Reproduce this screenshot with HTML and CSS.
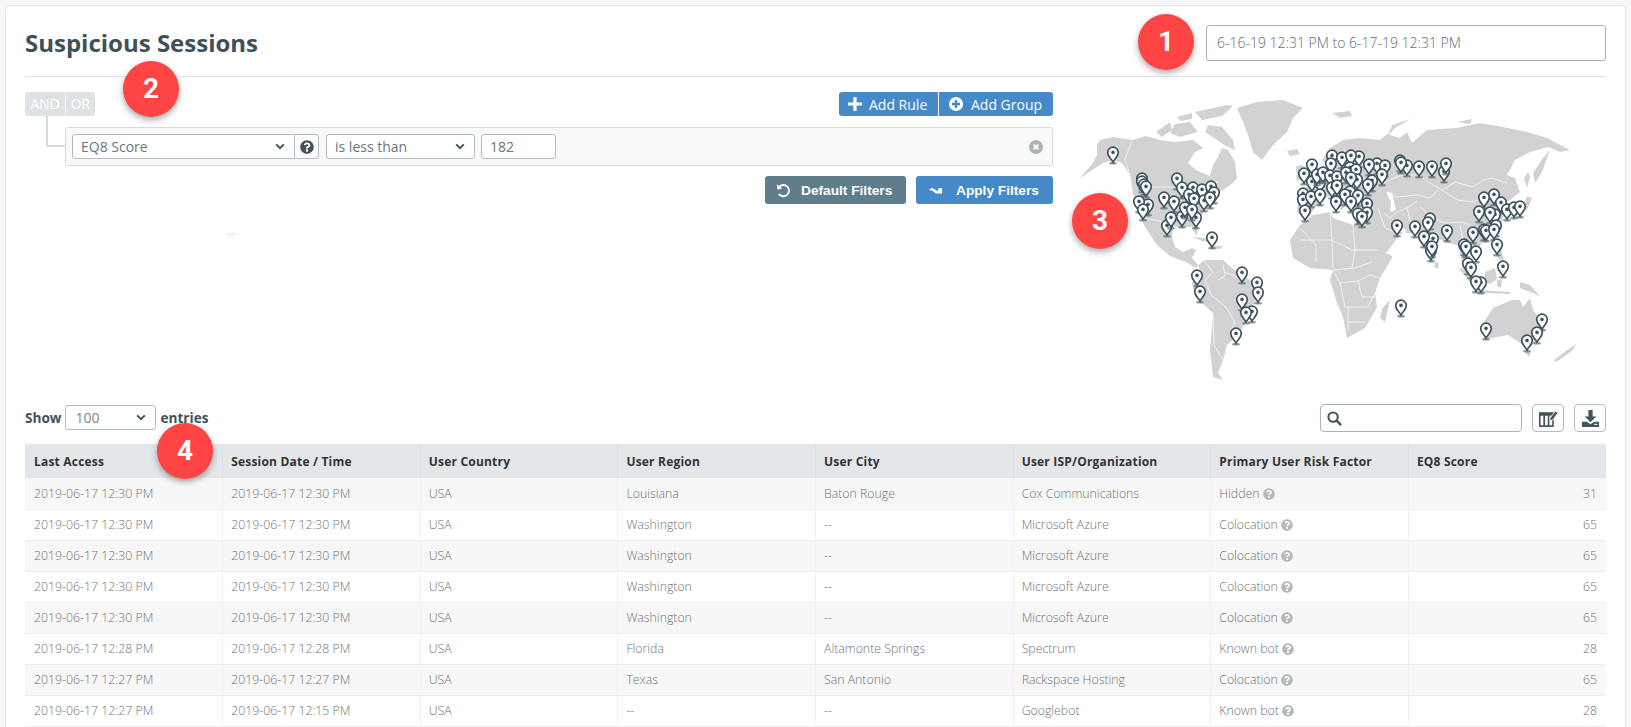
FILE: index.html
```html
<!DOCTYPE html>
<html lang="en">
    <head>
        <title>Suspicious Sessions</title>
        <link rel="stylesheet" href="styles.css">
    </head>
    <body>
        <svg class="icon-defs" width="0" height="0">
            <defs>
                <symbol id="icon-help" viewBox="0 0 512 512"><path d="M504 256c0 136.997-111.043 248-248 248S8 392.997 8 256C8 119.083 119.043 8 256 8s248 111.083 248 248zM262.655 90c-54.497 0-89.255 22.957-116.549 63.758-3.536 5.286-2.353 12.415 2.715 16.258l34.699 26.31c5.205 3.947 12.621 3.008 16.665-2.122 17.864-22.658 30.113-35.797 57.303-35.797 20.429 0 45.698 13.148 45.698 32.958 0 14.976-12.363 22.667-32.534 33.976C247.128 238.528 216 254.941 216 296v4c0 6.627 5.373 12 12 12h56c6.627 0 12-5.373 12-12v-1.333c0-28.462 83.186-29.647 83.186-106.667 0-58.002-60.165-102-116.531-102zM256 338c-25.365 0-46 20.635-46 46 0 25.364 20.635 46 46 46s46-20.636 46-46c0-25.365-20.635-46-46-46z"/></symbol>
                <symbol id="icon-chevron" viewBox="0 0 10 7"><path d="M1.2 1.4 5 5.2 8.8 1.4" fill="none" stroke="currentColor" stroke-width="2"/></symbol>
                <g id="pin">
                    <ellipse cx="0" cy="10.300" rx="4" ry="1.200" fill="#5f7178" opacity="0.75"/>
                    <path d="M0 9C-1.800 5.600-5.300 3.600-5.300-.5A5.300 5.300 0 1 1 5.300-.5C5.300 3.600 1.800 5.600 0 9Z" fill="#fff" stroke="#3d535d" stroke-width="1.700"/>
                    <circle cx="0" cy="-.6" r="1.800" fill="#3d535d"/>
                </g>
            </defs>
        </svg>

        <div class="card">
            <!-- Title and date range -->
            <div class="page-head">
                <h1>Suspicious Sessions</h1>
                <div class="date-range">6-16-19 12:31 PM to 6-17-19 12:31 PM</div>
            </div>

            <div class="filter-row">
                <!-- Query builder -->
                <div class="builder">
                    <div class="builder-top">
                        <div class="logic-group">
                            <span class="logic-btn logic-and">AND</span>
                            <span class="logic-btn logic-or">OR</span>
                        </div>
                        <div class="add-group">
                            <span class="add-btn add-rule">
                                <svg class="add-icon" viewBox="0 0 14 14"><path d="M5.400 0h3.200v5.400H14v3.200H8.600V14H5.400V8.600H0V5.400h5.400z" fill="#fff"/></svg>
                                Add Rule
                            </span>
                            <span class="add-btn add-grp">
                                <svg class="add-icon" viewBox="0 0 14 14"><circle cx="7" cy="7" r="7" fill="#fff"/><path d="M5.800 3h2.400v2.800H11v2.400H8.200V11H5.800V8.200H3V5.800h2.800z" fill="#4589c8"/></svg>
                                Add Group
                            </span>
                        </div>
                    </div>
                    <div class="rule-wrap">
                        <div class="rule-link"></div>
                        <div class="rule-box">
                            <div class="field field-name">EQ8 Score <svg class="chevron"><use href="#icon-chevron"/></svg></div>
                            <div class="field-help"><svg class="help-dark"><use href="#icon-help"/></svg></div>
                            <div class="field field-op">is less than <svg class="chevron"><use href="#icon-chevron"/></svg></div>
                            <div class="field field-value">182</div>
                            <svg class="rule-remove" viewBox="0 0 14 14"><circle cx="7" cy="7" r="7" fill="#aeb4b6"/><path d="M4.600 4.600l4.800 4.800M9.400 4.600 4.600 9.400" stroke="#fff" stroke-width="2"/></svg>
                        </div>
                    </div>
                    <div class="filter-actions">
                        <span class="action-btn btn-default">
                            <svg class="action-icon" viewBox="0 0 16 16"><path d="M3.200 4.400A6 6 0 1 1 3 11.600" fill="none" stroke="#fff" stroke-width="2"/><path d="M.8 1.200 1.400 6.800 6.800 6Z" fill="#fff"/></svg>
                            Default Filters
                        </span>
                        <span class="action-btn btn-apply">
                            <svg class="action-icon icon-apply" viewBox="0 0 16 10"><path d="M1 5C3 2.400 5.500 2.400 8 4.800 9 5.700 10 6 11 6V3.200L15 3V8.600H8C6 6 3.500 5 1 5Z" fill="#fff"/></svg>
                            Apply Filters
                        </span>
                    </div>
                    <div class="stray-mark"></div>
                </div>

                <!-- World map with session pins -->
                <svg class="world-map" viewBox="1061 77 545 327" width="545" height="327">
                    <g class="land">
                        <path d="M1080 178 1093 163 1097 155 1097 145 1100 140 1113 137 1132 140 1146 136 1160 140 1175 142 1193 140 1203 148 1195 152 1188 163 1196 170 1205 174 1210 176 1213 165 1218 157 1222 148 1228 150 1235 162 1237 178 1233 183 1223 190 1216 192 1213 198 1203 212 1198 225 1197 236 1193 230 1192 227 1173 227 1172 237 1175 247 1183 252 1192 248 1196 250 1192 258 1198 265 1196 268 1186 262 1170 256 1157 245 1145 227 1135 205 1130 175 1122 163 1113 160 1103 163Z"/>
                        <path d="M1198 265 1205 260 1223 260 1238 273 1262 287 1260 293 1252 307 1248 320 1235 338 1227 345 1223 360 1218 373 1223 380 1213 377 1210 350 1213 313 1195 297 1192 283 1200 270Z"/>
                        <path d="M1237 108 1257 102 1283 100 1303 108 1293 118 1287 132 1273 145 1262 160 1253 152 1248 135 1243 122Z"/>
                        <path d="M1208 125 1222 127 1233 140 1235 150 1226 146 1214 138 1205 132Z"/>
                        <path d="M1175 124 1190 122 1198 132 1180 137 1170 133Z"/>
                        <path d="M1195 112 1227 105 1233 106 1222 116 1202 120Z"/>
                        <path d="M1156 132 1170 122 1172 130 1162 137Z"/>
                        <path d="M1177 117 1192 113 1192 119 1180 121Z"/>
                        <path d="M1287 151 1297 149 1300 154 1290 156Z"/>
                        <path d="M1296 166 1303 165 1306 178 1297 181Z"/>
                        <path d="M1332 113 1350 111 1352 116 1340 118Z"/>
                        <path d="M1387 137 1392 125 1410 119 1395 128Z"/>
                        <path d="M1457 122 1472 119 1470 124Z"/>
                        <path d="M1192 237 1204 238 1217 243 1202 241Z"/>
                        <path d="M1210 246 1222 246 1221 249 1211 249Z"/>
                        <path d="M1290 240 1300 225 1313 215 1330 212 1333 218 1353 225 1368 225 1373 235 1380 250 1392 256 1392 258 1380 278 1375 293 1377 307 1365 328 1347 338 1343 317 1337 303 1330 280 1333 270 1310 268 1293 258Z"/>
                        <path d="M1390 300 1385 322 1380 318 1383 307Z"/>
                        <path d="M1297 212 1298 198 1303 190 1312 183 1325 178 1327 167 1322 160 1330 148 1343 140 1360 138 1380 140 1387 134 1400 138 1407 132 1412 143 1427 130 1457 128 1480 123 1503 127 1527 132 1547 138 1570 150 1560 152 1548 147 1530 152 1515 160 1507 175 1515 178 1520 192 1510 200 1507 202 1510 214 1505 212 1500 228 1487 238 1480 245 1477 258 1472 248 1465 257 1472 273 1462 263 1458 245 1447 243 1437 238 1432 258 1420 243 1417 233 1403 233 1398 237 1387 252 1377 253 1370 233 1365 220 1373 207 1368 205 1357 205 1352 212 1347 205 1341 210 1330 195 1317 205 1310 215 1300 215Z"/>
                        <path d="M1550 150 1543 158 1533 173 1535 183 1542 172 1547 158Z"/>
                        <path d="M1524 178 1528 172 1530 176 1527 188Z"/>
                        <path d="M1527 196 1532 198 1528 208 1516 216 1512 214 1524 206Z"/>
                        <path d="M1458 267 1466 270 1480 288 1476 290Z"/>
                        <path d="M1480 290 1510 292 1510 294 1482 293Z"/>
                        <path d="M1485 272 1495 268 1497 279 1490 284 1485 282Z"/>
                        <path d="M1497 280 1502 280 1501 288 1497 286Z"/>
                        <path d="M1520 282 1530 285 1540 296 1530 292 1520 288Z"/>
                        <path d="M1496 246 1501 248 1504 262 1498 258Z"/>
                        <path d="M1435 262 1439 263 1438 269 1434 267Z"/>
                        <path d="M1482 325 1493 308 1512 300 1520 300 1523 307 1530 298 1533 310 1545 325 1542 337 1530 347 1523 345 1508 335 1492 338 1485 340Z"/>
                        <path d="M1525 352 1531 352 1529 357Z"/>
                        <path d="M1576 344 1573 350 1562 358 1556 362 1554 360 1566 351Z"/>
                    </g>
                    <g class="borders">
                        <path d="M1132 140 1125 160 1130 175"/>
                        <path d="M1146 187H1178L1190 190 1203 188 1218 182"/>
                        <path d="M1145 218 1170 223 1176 228"/>
                        <path d="M1205 262 1213 272 1205 280 1211 295 1226 307 1235 322 1232 328"/>
                        <path d="M1223 264 1225 276 1218 280"/>
                        <path d="M1240 278 1232 275 1224 272"/>
                        <path d="M1213 313 1214 345 1223 360"/>
                        <path d="M1333 270 1355 268 1372 262"/>
                        <path d="M1352 268 1355 250 1353 225"/>
                        <path d="M1333 270 1340 283 1358 281 1362 297 1375 297"/>
                        <path d="M1340 283 1345 307 1368 307 1375 293"/>
                        <path d="M1348 307 1348 330"/>
                        <path d="M1348 322 1365 322"/>
                        <path d="M1358 281 1370 275 1380 278"/>
                        <path d="M1300 228 1316 245 1316 262"/>
                        <path d="M1330 212 1332 240 1352 250"/>
                        <path d="M1300 240H1332L1333 268"/>
                        <path d="M1352 250 1378 250"/>
                        <path d="M1383 183 1402 175 1418 175 1430 183 1442 190 1455 182 1473 187 1483 180 1492 178 1507 183"/>
                        <path d="M1442 190 1457 200 1473 202 1485 198"/>
                        <path d="M1387 192 1397 197 1417 195 1430 198 1438 190"/>
                        <path d="M1420 207 1433 218 1445 223 1462 222 1470 225"/>
                        <path d="M1384 213 1390 218 1397 212 1407 208 1417 201"/>
                        <path d="M1407 208 1412 228"/>
                        <path d="M1378 208 1385 228 1395 232"/>
                        <path d="M1460 225 1464 245"/>
                        <path d="M1320 185 1345 183 1370 178"/>
                        <path d="M1340 168 1345 148"/>
                    </g>
                    <path class="water" d="M1386 192 1392 193 1396 210 1390 212 1391 202Z"/>
                    <path class="water" d="M1396 226 1405 229 1406 233 1400 232Z"/>
                    <g class="pins">
                        <use href="#pin" x="1113" y="153"/>
                        <use href="#pin" x="1142" y="179"/>
                        <use href="#pin" x="1142" y="182"/>
                        <use href="#pin" x="1144" y="185"/>
                        <use href="#pin" x="1146" y="187"/>
                        <use href="#pin" x="1148" y="205"/>
                        <use href="#pin" x="1139" y="202"/>
                        <use href="#pin" x="1143" y="210"/>
                        <use href="#pin" x="1164" y="198"/>
                        <use href="#pin" x="1174" y="202"/>
                        <use href="#pin" x="1177" y="179"/>
                        <use href="#pin" x="1193" y="188"/>
                        <use href="#pin" x="1182" y="188"/>
                        <use href="#pin" x="1202" y="190"/>
                        <use href="#pin" x="1211" y="187"/>
                        <use href="#pin" x="1214" y="193"/>
                        <use href="#pin" x="1189" y="195"/>
                        <use href="#pin" x="1204" y="201"/>
                        <use href="#pin" x="1210" y="198"/>
                        <use href="#pin" x="1194" y="199"/>
                        <use href="#pin" x="1182" y="217"/>
                        <use href="#pin" x="1185" y="208"/>
                        <use href="#pin" x="1196" y="218"/>
                        <use href="#pin" x="1192" y="210"/>
                        <use href="#pin" x="1167" y="226"/>
                        <use href="#pin" x="1171" y="218"/>
                        <use href="#pin" x="1212" y="238"/>
                        <use href="#pin" x="1197" y="276"/>
                        <use href="#pin" x="1242" y="273"/>
                        <use href="#pin" x="1257" y="283"/>
                        <use href="#pin" x="1258" y="293"/>
                        <use href="#pin" x="1200" y="292"/>
                        <use href="#pin" x="1242" y="300"/>
                        <use href="#pin" x="1252" y="312"/>
                        <use href="#pin" x="1246" y="313"/>
                        <use href="#pin" x="1236" y="334"/>
                        <use href="#pin" x="1332" y="156"/>
                        <use href="#pin" x="1359" y="157"/>
                        <use href="#pin" x="1342" y="158"/>
                        <use href="#pin" x="1351" y="156"/>
                        <use href="#pin" x="1312" y="165"/>
                        <use href="#pin" x="1312" y="182"/>
                        <use href="#pin" x="1304" y="174"/>
                        <use href="#pin" x="1320" y="183"/>
                        <use href="#pin" x="1317" y="175"/>
                        <use href="#pin" x="1323" y="173"/>
                        <use href="#pin" x="1331" y="164"/>
                        <use href="#pin" x="1330" y="176"/>
                        <use href="#pin" x="1350" y="168"/>
                        <use href="#pin" x="1356" y="170"/>
                        <use href="#pin" x="1337" y="177"/>
                        <use href="#pin" x="1346" y="173"/>
                        <use href="#pin" x="1357" y="180"/>
                        <use href="#pin" x="1351" y="178"/>
                        <use href="#pin" x="1332" y="188"/>
                        <use href="#pin" x="1350" y="192"/>
                        <use href="#pin" x="1337" y="186"/>
                        <use href="#pin" x="1358" y="196"/>
                        <use href="#pin" x="1345" y="195"/>
                        <use href="#pin" x="1303" y="194"/>
                        <use href="#pin" x="1303" y="200"/>
                        <use href="#pin" x="1311" y="197"/>
                        <use href="#pin" x="1320" y="195"/>
                        <use href="#pin" x="1336" y="202"/>
                        <use href="#pin" x="1351" y="202"/>
                        <use href="#pin" x="1305" y="211"/>
                        <use href="#pin" x="1367" y="204"/>
                        <use href="#pin" x="1367" y="213"/>
                        <use href="#pin" x="1358" y="214"/>
                        <use href="#pin" x="1362" y="217"/>
                        <use href="#pin" x="1377" y="164"/>
                        <use href="#pin" x="1369" y="165"/>
                        <use href="#pin" x="1385" y="166"/>
                        <use href="#pin" x="1382" y="175"/>
                        <use href="#pin" x="1372" y="181"/>
                        <use href="#pin" x="1368" y="185"/>
                        <use href="#pin" x="1407" y="166"/>
                        <use href="#pin" x="1400" y="161"/>
                        <use href="#pin" x="1401" y="163"/>
                        <use href="#pin" x="1419" y="167"/>
                        <use href="#pin" x="1432" y="167"/>
                        <use href="#pin" x="1444" y="172"/>
                        <use href="#pin" x="1446" y="164"/>
                        <use href="#pin" x="1494" y="195"/>
                        <use href="#pin" x="1484" y="198"/>
                        <use href="#pin" x="1501" y="203"/>
                        <use href="#pin" x="1479" y="212"/>
                        <use href="#pin" x="1495" y="215"/>
                        <use href="#pin" x="1490" y="213"/>
                        <use href="#pin" x="1507" y="210"/>
                        <use href="#pin" x="1514" y="208"/>
                        <use href="#pin" x="1520" y="207"/>
                        <use href="#pin" x="1397" y="226"/>
                        <use href="#pin" x="1415" y="227"/>
                        <use href="#pin" x="1430" y="219"/>
                        <use href="#pin" x="1428" y="223"/>
                        <use href="#pin" x="1447" y="231"/>
                        <use href="#pin" x="1433" y="239"/>
                        <use href="#pin" x="1424" y="237"/>
                        <use href="#pin" x="1431" y="251"/>
                        <use href="#pin" x="1432" y="247"/>
                        <use href="#pin" x="1473" y="233"/>
                        <use href="#pin" x="1496" y="226"/>
                        <use href="#pin" x="1484" y="230"/>
                        <use href="#pin" x="1486" y="231"/>
                        <use href="#pin" x="1494" y="230"/>
                        <use href="#pin" x="1464" y="245"/>
                        <use href="#pin" x="1466" y="247"/>
                        <use href="#pin" x="1476" y="252"/>
                        <use href="#pin" x="1497" y="245"/>
                        <use href="#pin" x="1503" y="267"/>
                        <use href="#pin" x="1468" y="264"/>
                        <use href="#pin" x="1471" y="268"/>
                        <use href="#pin" x="1481" y="283"/>
                        <use href="#pin" x="1476" y="282"/>
                        <use href="#pin" x="1401" y="306"/>
                        <use href="#pin" x="1486" y="329"/>
                        <use href="#pin" x="1542" y="320"/>
                        <use href="#pin" x="1537" y="333"/>
                        <use href="#pin" x="1527" y="341"/>
                    </g>
                </svg>
            </div>

            <!-- Table tools -->
            <div class="table-tools">
                <div class="length-control">
                    <span>Show</span>
                    <div class="field field-length">100 <svg class="chevron"><use href="#icon-chevron"/></svg></div>
                    <span>entries</span>
                </div>
                <div class="tool-group">
                    <div class="search-box">
                        <svg class="search-icon" viewBox="0 0 16 16"><circle cx="6.500" cy="6.500" r="5" fill="none" stroke="#41565f" stroke-width="2.200"/><path d="M10.300 10.300 15 15" stroke="#41565f" stroke-width="2.600"/></svg>
                    </div>
                    <div class="tool-btn">
                        <svg class="tool-icon" viewBox="0 0 18 16"><path d="M0 2h14v14H0z" fill="#41565f"/><path d="M1.500 5.500h2.600V14.500H1.500zM5.700 5.500h2.600V14.500H5.700zM9.900 5.500h2.600V14.500H9.900z" fill="#fff"/><path d="M10.500 7.500 15.500 .8 18 2.700 13 9.400 10.200 10Z" fill="#41565f" stroke="#fff" stroke-width=".8"/></svg>
                    </div>
                    <div class="tool-btn">
                        <svg class="tool-icon" viewBox="0 0 16 16"><path d="M6 0h4v6h3.500L8 11.500 2.500 6H6z" fill="#41565f"/><path d="M0 11h4.500L8 13.500 11.500 11H16v5H0z" fill="#41565f"/><path d="M11.500 13.500h3" stroke="#fff" stroke-width="1"/></svg>
                    </div>
                </div>
            </div>

            <!-- Sessions table -->
            <table class="session-table">
                <thead>
                    <tr>
                        <th>Last Access</th>
                        <th>Session Date / Time</th>
                        <th>User Country</th>
                        <th>User Region</th>
                        <th>User City</th>
                        <th>User ISP/Organization</th>
                        <th>Primary User Risk Factor</th>
                        <th>EQ8 Score</th>
                    </tr>
                </thead>
                <tbody>
                    <tr>
                        <td>2019-06-17 12:30 PM</td><td>2019-06-17 12:30 PM</td><td>USA</td><td>Louisiana</td><td>Baton Rouge</td><td>Cox Communications</td>
                        <td>Hidden <svg class="help-cell"><use href="#icon-help"/></svg></td><td class="score">31</td>
                    </tr>
                    <tr>
                        <td>2019-06-17 12:30 PM</td><td>2019-06-17 12:30 PM</td><td>USA</td><td>Washington</td><td>--</td><td>Microsoft Azure</td>
                        <td>Colocation <svg class="help-cell"><use href="#icon-help"/></svg></td><td class="score">65</td>
                    </tr>
                    <tr>
                        <td>2019-06-17 12:30 PM</td><td>2019-06-17 12:30 PM</td><td>USA</td><td>Washington</td><td>--</td><td>Microsoft Azure</td>
                        <td>Colocation <svg class="help-cell"><use href="#icon-help"/></svg></td><td class="score">65</td>
                    </tr>
                    <tr>
                        <td>2019-06-17 12:30 PM</td><td>2019-06-17 12:30 PM</td><td>USA</td><td>Washington</td><td>--</td><td>Microsoft Azure</td>
                        <td>Colocation <svg class="help-cell"><use href="#icon-help"/></svg></td><td class="score">65</td>
                    </tr>
                    <tr>
                        <td>2019-06-17 12:30 PM</td><td>2019-06-17 12:30 PM</td><td>USA</td><td>Washington</td><td>--</td><td>Microsoft Azure</td>
                        <td>Colocation <svg class="help-cell"><use href="#icon-help"/></svg></td><td class="score">65</td>
                    </tr>
                    <tr>
                        <td>2019-06-17 12:28 PM</td><td>2019-06-17 12:28 PM</td><td>USA</td><td>Florida</td><td>Altamonte Springs</td><td>Spectrum</td>
                        <td>Known bot <svg class="help-cell"><use href="#icon-help"/></svg></td><td class="score">28</td>
                    </tr>
                    <tr>
                        <td>2019-06-17 12:27 PM</td><td>2019-06-17 12:27 PM</td><td>USA</td><td>Texas</td><td>San Antonio</td><td>Rackspace Hosting</td>
                        <td>Colocation <svg class="help-cell"><use href="#icon-help"/></svg></td><td class="score">65</td>
                    </tr>
                    <tr>
                        <td>2019-06-17 12:27 PM</td><td>2019-06-17 12:15 PM</td><td>USA</td><td>--</td><td>--</td><td>Googlebot</td>
                        <td>Known bot <svg class="help-cell"><use href="#icon-help"/></svg></td><td class="score">28</td>
                    </tr>
                </tbody>
            </table>
        </div>

        <!-- Numbered callouts -->
        <span class="callout callout-1">1</span>
        <span class="callout callout-2">2</span>
        <span class="callout callout-3">3</span>
        <span class="callout callout-4">4</span>
    </body>
</html>
```

FILE: styles.css
```css
html, body { height: 100%; overflow: hidden; }
body { position: relative; margin: 0; padding: 5px 5px 0; box-sizing: border-box; background-color: #f6f8fa; font-family: "Open Sans", sans-serif; color: #41525a; }
.icon-defs { position: absolute; }

/* Card */
.card { background-color: #fff; border: 1px solid #e1e7eb; border-radius: 4px; padding: 0 19px; height: 740px; box-sizing: border-box; }

/* Title and date range */
.page-head { display: flex; justify-content: space-between; align-items: center; height: 71px; border-bottom: 1px solid #dfe3e6; box-sizing: border-box; padding-top: 3px; }
h1 { margin: 0; font-size: 24px; font-weight: 700; color: #3f5059; }
.date-range { width: 400px; height: 36px; line-height: 34px; box-sizing: border-box; border: 1px solid #a9b4b9; border-radius: 3px; padding-left: 10px; font-size: 14px; font-weight: 300; color: #5f6c72; }

/* Filter row */
.filter-row { display: flex; gap: 8px; }
.builder { position: relative; width: 1028px; padding-top: 15px; }
.world-map { display: block; flex: none; }
.land path { fill: #d2d2d2; }
.borders path { fill: none; stroke: #fff; stroke-width: 0.8; opacity: 0.85; }
.water { fill: #fff; }

.builder-top { display: flex; justify-content: space-between; }
.logic-group, .add-group { display: flex; gap: 1px; }
.logic-btn { height: 24px; line-height: 24px; background-color: #dde2e4; color: #fff; font-size: 14px; text-align: center; }
.logic-and { width: 40px; border-radius: 3px 0 0 3px; }
.logic-or { width: 29px; border-radius: 0 3px 3px 0; }
.add-btn { display: flex; align-items: center; height: 24px; background-color: #4589c8; color: #fff; font-size: 14px; box-sizing: border-box; }
.add-rule { width: 99px; padding-left: 9px; gap: 7px; border-radius: 3px 0 0 3px; }
.add-grp { width: 114px; padding-left: 10px; gap: 8px; border-radius: 0 3px 3px 0; }
.add-icon { width: 14px; height: 14px; }

.rule-wrap { position: relative; margin-top: 11px; padding-left: 40px; }
.rule-link { position: absolute; left: 21px; top: -11px; width: 19px; height: 31px; border-left: 2px solid #d4dbe0; border-bottom: 2px solid #d4dbe0; box-sizing: border-box; }
.rule-box { display: flex; align-items: center; height: 39px; box-sizing: border-box; padding-left: 6px; background-color: #f8f9fb; border: 1px solid #d4dbdf; border-radius: 3px; }
.field { position: relative; height: 25px; line-height: 23px; box-sizing: border-box; border: 1px solid #b4bdc1; border-radius: 3px; background-color: #fff; padding-left: 8px; font-size: 14px; color: #6a777d; }
.field-name { width: 223px; border-radius: 3px 0 0 3px; }
.field-help { display: flex; align-items: center; justify-content: center; width: 24px; height: 25px; box-sizing: border-box; border: 1px solid #b4bdc1; border-left: 0; border-radius: 0 3px 3px 0; background-color: #fff; }
.help-dark { width: 14px; height: 14px; fill: #41525a; }
.field-op { width: 149px; margin-left: 7px; }
.field-value { width: 75px; margin-left: 6px; }
.field-length { width: 91px; height: 25px; line-height: 23px; padding-left: 9px; font-weight: 400; color: #7b878c; }
.chevron { position: absolute; right: 9px; top: 8px; width: 10px; height: 7px; color: #41525a; }
.rule-remove { width: 14px; height: 14px; margin-left: auto; margin-right: 9px; }

.filter-actions { display: flex; justify-content: flex-end; gap: 10px; margin-top: 10px; }
.action-btn { display: flex; align-items: center; height: 28px; box-sizing: border-box; border-radius: 3px; color: #fff; font-family: "Liberation Sans", Arial, sans-serif; font-size: 13.7px; font-weight: 700; }
.btn-default { width: 141px; padding-left: 11px; gap: 10px; background-color: #607d8b; }
.btn-apply { width: 137px; padding-left: 12px; gap: 13px; background-color: #4589c8; }
.action-icon { width: 15px; height: 15px; }
.icon-apply { height: 10px; }
.stray-mark { position: absolute; left: 202px; top: 156px; width: 8px; height: 7px; background: linear-gradient(#eeeeee, #fff); }

/* Table tools */
.table-tools { display: flex; justify-content: space-between; align-items: center; height: 28px; }
.length-control { display: flex; align-items: center; gap: 4px; margin-top: -2px; font-size: 13.6px; font-weight: 700; }
.tool-group { display: flex; align-items: center; gap: 10px; }
.search-box { display: flex; align-items: center; width: 202px; height: 28px; box-sizing: border-box; padding-left: 6px; border: 1px solid #a9b4b9; border-radius: 4px; }
.search-icon { width: 15px; height: 15px; }
.tool-btn { display: flex; align-items: center; justify-content: center; width: 32px; height: 28px; box-sizing: border-box; border: 1px solid #b4bdc1; border-radius: 4px; }
.tool-icon { width: 19px; height: 17px; }

/* Sessions table */
.session-table { width: 100%; margin-top: 12px; border-collapse: collapse; table-layout: fixed; font-size: 12px; }
.session-table th { height: 34px; padding: 0 9px 0 8px; background-color: #e4e7ea; border-left: 1px solid #dbe0e3; color: #333; font-weight: 700; text-align: left; letter-spacing: 0.2px; }
.session-table td { height: 31px; padding: 0 9px 0 8px; box-sizing: border-box; border-left: 1px solid #eff1f2; border-bottom: 1px solid #eceff0; color: #6f7375; font-weight: 300; font-size: 12.3px; }
.session-table th:first-child, .session-table td:first-child { border-left: 0; padding-left: 9px; }
.session-table tbody tr:nth-child(odd) { background-color: #f7f7f7; }
.session-table .score { text-align: right; }
.help-cell { width: 12px; height: 12px; fill: #b4b9bb; vertical-align: -2px; }

/* Numbered callouts */
.callout { position: absolute; width: 56px; height: 56px; border-radius: 50%; background-color: #ff4444; box-shadow: 0 3px 6px rgba(0, 0, 0, 0.35); color: #fff; font-family: Roboto, sans-serif; font-size: 28px; font-weight: 700; line-height: 56px; text-align: center; }
.callout-1 { left: 1138px; top: 14px; }
.callout-2 { left: 123px; top: 61px; }
.callout-3 { left: 1072px; top: 193px; }
.callout-4 { left: 157px; top: 423px; }
```
